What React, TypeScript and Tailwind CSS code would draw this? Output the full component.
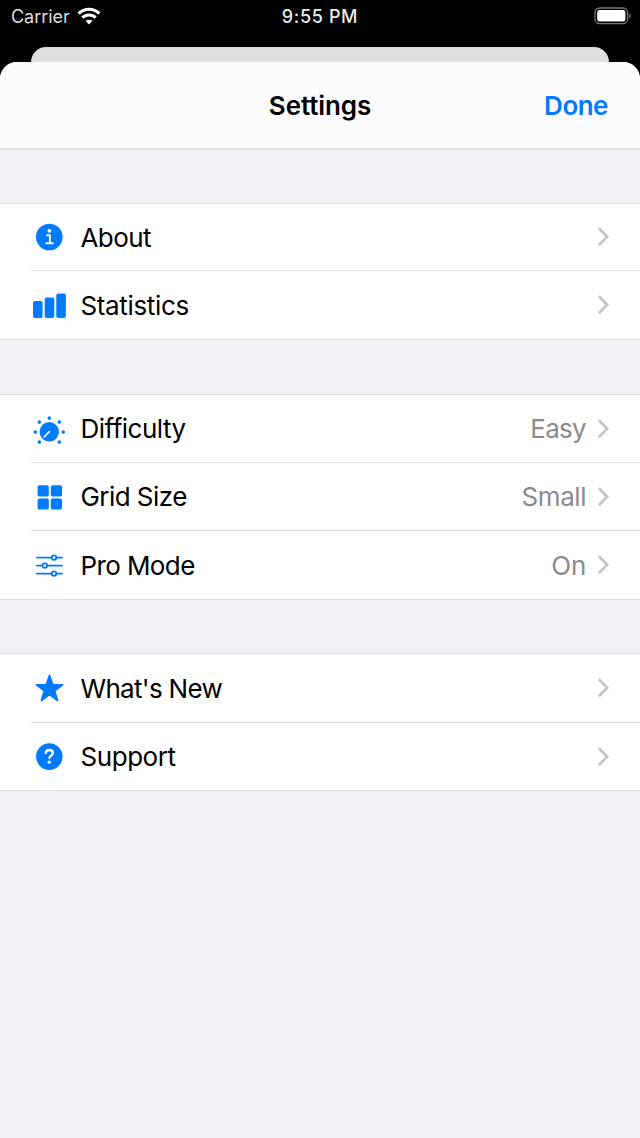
import type { ReactNode } from "react";
import clsx from "clsx";

type Item = {
  label: string;
  icon: ReactNode;
  value?: string;
  height: string;
  // tracking for the label and the value
  tracking: string;
  valueTracking?: string;
};

const InfoIcon = () => (
  <svg width="34" height="34" viewBox="0 0 34 34">
    <circle cx="17.3" cy="17" r="13.3" fill="#007aff" />
    <circle cx="17.3" cy="10.8" r="1.9" fill="#fff" />
    <path d="M14.9 15.3h3v8M14.4 23.3h6.4" fill="none" stroke="#fff" strokeWidth="1.9" strokeLinecap="round" strokeLinejoin="round" />
  </svg>
);

const BarsIcon = () => (
  <svg width="34" height="34" viewBox="0 0 34 34" fill="#007aff">
    <rect x="1" y="13" width="9.6" height="17" rx="2" />
    <rect x="12.7" y="9.4" width="9.6" height="20.6" rx="2" />
    <rect x="24.3" y="5.6" width="9.6" height="24.4" rx="2" />
  </svg>
);

const DialIcon = () => (
  <svg width="34" height="34" viewBox="0 0 34 34" fill="#007aff">
    <circle cx="17.3" cy="19.8" r="9.7" />
    <circle cx="17.3" cy="6.1" r="1.8" />
    <circle cx="7.3" cy="10.1" r="1.8" />
    <circle cx="27.3" cy="10.1" r="1.8" />
    <circle cx="3.3" cy="20" r="1.8" />
    <circle cx="31.3" cy="20" r="1.8" />
    <circle cx="7.3" cy="30.1" r="1.8" />
    <circle cx="27.3" cy="30.1" r="1.8" />
    <path d="M17.4 19.7l-5.2 5.2" stroke="#fff" strokeWidth="1.7" strokeLinecap="round" />
  </svg>
);

const GridIcon = () => (
  <svg width="34" height="34" viewBox="0 0 34 34" fill="#007aff">
    <rect x="5.6" y="5.3" width="11.2" height="11.2" rx="1.8" />
    <rect x="18.8" y="5.3" width="11.2" height="11.2" rx="1.8" />
    <rect x="5.6" y="18.4" width="11.2" height="11.2" rx="1.8" />
    <rect x="18.8" y="18.4" width="11.2" height="11.2" rx="1.8" />
  </svg>
);

const SlidersIcon = () => (
  <svg width="34" height="34" viewBox="0 0 34 34" fill="#fff" stroke="#007aff" strokeWidth="1.8" strokeLinecap="round">
    <path d="M5 9.6h25M5 17.6h25M5 25.6h25" />
    <circle cx="22" cy="9.6" r="2.3" />
    <circle cx="12.8" cy="17.6" r="2.3" />
    <circle cx="22" cy="25.6" r="2.3" />
  </svg>
);

const StarIcon = () => (
  <svg width="34" height="34" viewBox="0 0 34 34">
    <path
      d="M17.5 4.2l3.2 9.4 9.9.2-7.9 6 2.9 9.7-8.1-5.8-8.1 5.8 2.9-9.7-7.9-6 9.9-.2z"
      fill="#007aff"
      stroke="#007aff"
      strokeWidth="1.6"
      strokeLinejoin="round"
    />
  </svg>
);

const HelpIcon = () => (
  <svg width="34" height="34" viewBox="0 0 34 34">
    <circle cx="17.3" cy="16.6" r="13.3" fill="#007aff" />
    <path d="M13.8 13c.2-2 1.6-3 3.5-3 2.1 0 3.6 1.2 3.6 3 0 2.5-3.5 2.5-3.5 5.1" fill="none" stroke="#fff" strokeWidth="2.3" strokeLinecap="round" />
    <circle cx="17.3" cy="22.2" r="1.6" fill="#fff" />
  </svg>
);

const GROUPS: Item[][] = [
  [
    { label: "About", icon: <InfoIcon />, height: "h-[67px]", tracking: "tracking-[-0.6px]" },
    { label: "Statistics", icon: <BarsIcon />, height: "h-[68px]", tracking: "tracking-[-0.35px]" },
  ],
  [
    { label: "Difficulty", icon: <DialIcon />, height: "h-[68px]", tracking: "tracking-[-0.5px]", value: "Easy", valueTracking: "tracking-[-0.7px]" },
    { label: "Grid Size", icon: <GridIcon />, height: "h-[68px]", tracking: "tracking-[-0.55px]", value: "Small", valueTracking: "tracking-[-0.45px]" },
    { label: "Pro Mode", icon: <SlidersIcon />, height: "h-[68px]", tracking: "tracking-[-0.6px]", value: "On", valueTracking: "tracking-[-0.3px]" },
  ],
  [
    { label: "What's New", icon: <StarIcon />, height: "h-[69px]", tracking: "tracking-[-0.7px]" },
    { label: "Support", icon: <HelpIcon />, height: "h-[67px]", tracking: "tracking-[-0.45px]" },
  ],
];

function StatusBar() {
  return (
    <div className="grid h-8 grid-cols-3 items-center pr-[8px] pl-[11px] text-[18px] text-white">
      <div className="flex items-center gap-[7px]">
        <span className="tracking-[-0.05px] text-[#dedede]">Carrier</span>
        <svg width="24" height="18" viewBox="0 0 24 18" fill="none" stroke="#fff" strokeWidth="3.2">
          <path d="M1.6 6.5a14.8 14.8 0 0 1 20.8 0M5.4 10.7a9.4 9.4 0 0 1 13.2 0" />
          <path d="M12 17.6l-3.4-3.5a4.9 4.9 0 0 1 6.8 0z" fill="#fff" stroke="none" />
        </svg>
      </div>
      <span className="pr-[3px] text-center font-medium tracking-[0.65px] text-[#ececec]">9:55 PM</span>
      <svg className="justify-self-end" width="38" height="18" viewBox="0 0 38 18">
        <rect x="1" y="1" width="32.6" height="15.6" rx="4.5" fill="none" stroke="#777" strokeWidth="1.3" />
        <rect x="3.2" y="3" width="28.2" height="11.6" rx="2.4" fill="#fff" />
        <path d="M35.2 6.2c2 .8 2 4.4 0 5.2z" fill="#777" />
      </svg>
    </div>
  );
}

function Row({ item, last }: { item: Item; last: boolean }) {
  return (
    <div className={clsx("flex pl-[31px]", item.height)}>
      <div className={clsx("flex flex-1 items-center pr-[30px] pl-px", !last && "border-b border-[#dedee1]")}>
        {item.icon}
        <span className={clsx("ml-[14.5px] text-black", item.tracking)}>{item.label}</span>
        {item.value && (
          <span className={clsx("ml-auto text-[#8a8a8e]", item.valueTracking)}>{item.value}</span>
        )}
        <svg className={item.value ? "ml-[10px]" : "ml-auto"} width="14" height="22" viewBox="0 0 14 22">
          <path d="M2.8 2.2l8.4 8.5-8.4 8.5" fill="none" stroke="#c4c4c7" strokeWidth="2.7" />
        </svg>
      </div>
    </div>
  );
}

export default function App() {
  return (
    <div className="flex h-[1138px] w-[640px] flex-col overflow-hidden bg-black font-['Inter','Liberation_Sans',sans-serif]">
      <StatusBar />
      {/* card behind the sheet */}
      <div className="mx-[31px] mt-[14.5px] h-[15.5px] shrink-0 rounded-t-[15px] bg-[#dfdfdf]" />
      <div className="flex flex-1 flex-col overflow-hidden rounded-t-[17px] bg-[#f1f1f7]">
        <header className="grid h-[88px] shrink-0 grid-cols-3 items-center border-b-2 border-[#e0e0e4] bg-[#fcfcff] px-8 text-[26px] font-semibold">
          <span />
          <span className="text-center tracking-[-0.1px] text-black">Settings</span>
          <span className="text-right tracking-[-0.5px] text-[#007aff]">Done</span>
        </header>
        <main className="flex flex-col pt-[53px] text-[26px]">
          {GROUPS.map((group, i) => (
            <section key={i} className="mb-[54px] border-y border-[#dedee2] bg-white last:-mt-px">
              {group.map((item, j) => (
                <Row key={item.label} item={item} last={j === group.length - 1} />
              ))}
            </section>
          ))}
        </main>
      </div>
    </div>
  );
}
